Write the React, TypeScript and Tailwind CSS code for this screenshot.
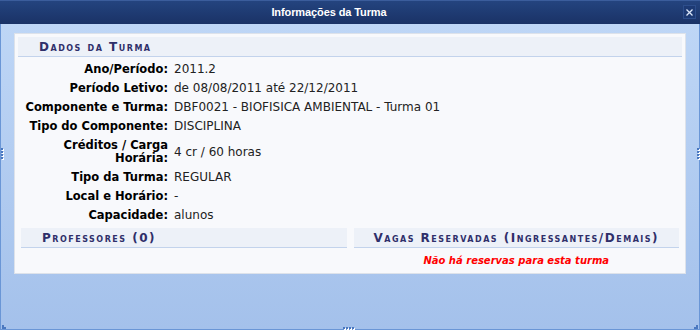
import React from "react";

const rows: { label: string; value: string }[] = [
  { label: "Ano/Período:", value: "2011.2" },
  { label: "Período Letivo:", value: "de 08/08/2011 até 22/12/2011" },
  { label: "Componente e Turma:", value: "DBF0021 - BIOFISICA AMBIENTAL - Turma 01" },
  { label: "Tipo do Componente:", value: "DISCIPLINA" },
  { label: "Créditos / Carga Horária:", value: "4 cr / 60 horas" },
  { label: "Tipo da Turma:", value: "REGULAR" },
  { label: "Local e Horário:", value: "-" },
  { label: "Capacidade:", value: "alunos" },
];

function Caption({ children, className = "" }: { children: React.ReactNode; className?: string }) {
  return (
    <div
      className={`h-[20px] flex items-center bg-[#edf1f8] border-b border-[#c3d3ec] text-[12px] font-bold text-[#2f2f6a] tracking-[1.5px] [font-variant:small-caps] ${className}`}
    >
      {children}
    </div>
  );
}

function Grip({ vertical }: { vertical?: boolean }) {
  return (
    <div className={`flex ${vertical ? "flex-col" : "flex-row"} gap-[1px]`}>
      {[0, 1, 2, 3].map((i) => (
        <div key={i} className="w-[2px] h-[2px] bg-[#4a78c0] shadow-[1px_1px_0_#ffffff]" />
      ))}
    </div>
  );
}

export default function App() {
  return (
    <div className="w-[700px] h-[330px] relative flex flex-col overflow-hidden font-['DejaVu_Sans',Verdana,sans-serif] text-[#222]">
      {/* TITLE */}
      <div className="h-[24px] shrink-0 flex items-center justify-center pr-[42px] bg-gradient-to-b from-[#24447f] to-[#1a3266] border-t border-[#3b5d9c] text-white text-[11px] tracking-[-0.1px] font-bold font-['Liberation_Sans',Arial,sans-serif]">
        Informações da Turma
      </div>
      <button className="absolute right-[4px] top-[5px] w-[13px] h-[14px] flex items-center justify-center bg-[#1d3a74] border border-[#2d4e8c] text-[#dbe6f8]">
        <svg width="7" height="7" viewBox="0 0 7 7">
          <path d="M0.5 0.5 L6.5 6.5 M6.5 0.5 L0.5 6.5" stroke="currentColor" strokeWidth="1.3" />
        </svg>
      </button>

      {/* BODY */}
      <div className="flex-1 px-[13px] pt-[9px] bg-gradient-to-b from-[#bed6f6] to-[#a4c1eb] border-x border-b border-[#6a96d6]">
        <div className="h-[241px] bg-[#f8f9fc] border border-[#dde2ea] p-[3px]">
          <Caption className="pl-[21px]">Dados da Turma</Caption>

          <div className="pt-[3px] leading-[13px]">
            {rows.map((r) => (
              <div key={r.label} className="flex items-center py-[3px]">
                <div className="w-[150px] shrink-0 pl-[4px] text-right text-[11.5px] font-bold text-black">{r.label}</div>
                <div className="pl-[6px] text-[12px]">{r.value}</div>
              </div>
            ))}
          </div>

          <div className="flex gap-[7px] px-[3px] mt-[3px]">
            <div className="flex-1">
              <Caption className="pl-[21px]">Professores (0)</Caption>
            </div>
            <div className="flex-1">
              <Caption className="justify-center">Vagas Reservadas (Ingressantes/Demais)</Caption>
              <div className="text-center text-[10px] font-bold italic text-[#ff0000] pt-[5px]">
                Não há reservas para esta turma
              </div>
            </div>
          </div>
        </div>
      </div>

      {/* GRIPS */}
      <div className="absolute left-[1px] top-[148px]">
        <Grip vertical />
      </div>
      <div className="absolute right-[1px] top-[148px]">
        <Grip vertical />
      </div>
      <div className="absolute left-[343px] bottom-[1px]">
        <Grip />
      </div>
      <div className="absolute left-[2px] bottom-[1px] w-[4px] h-[4px] border-l-2 border-b-2 border-dotted border-[#4a78c0]" />
      <div className="absolute right-[2px] bottom-[1px] w-[4px] h-[4px] border-r-2 border-b-2 border-dotted border-[#4a78c0]" />
    </div>
  );
}
